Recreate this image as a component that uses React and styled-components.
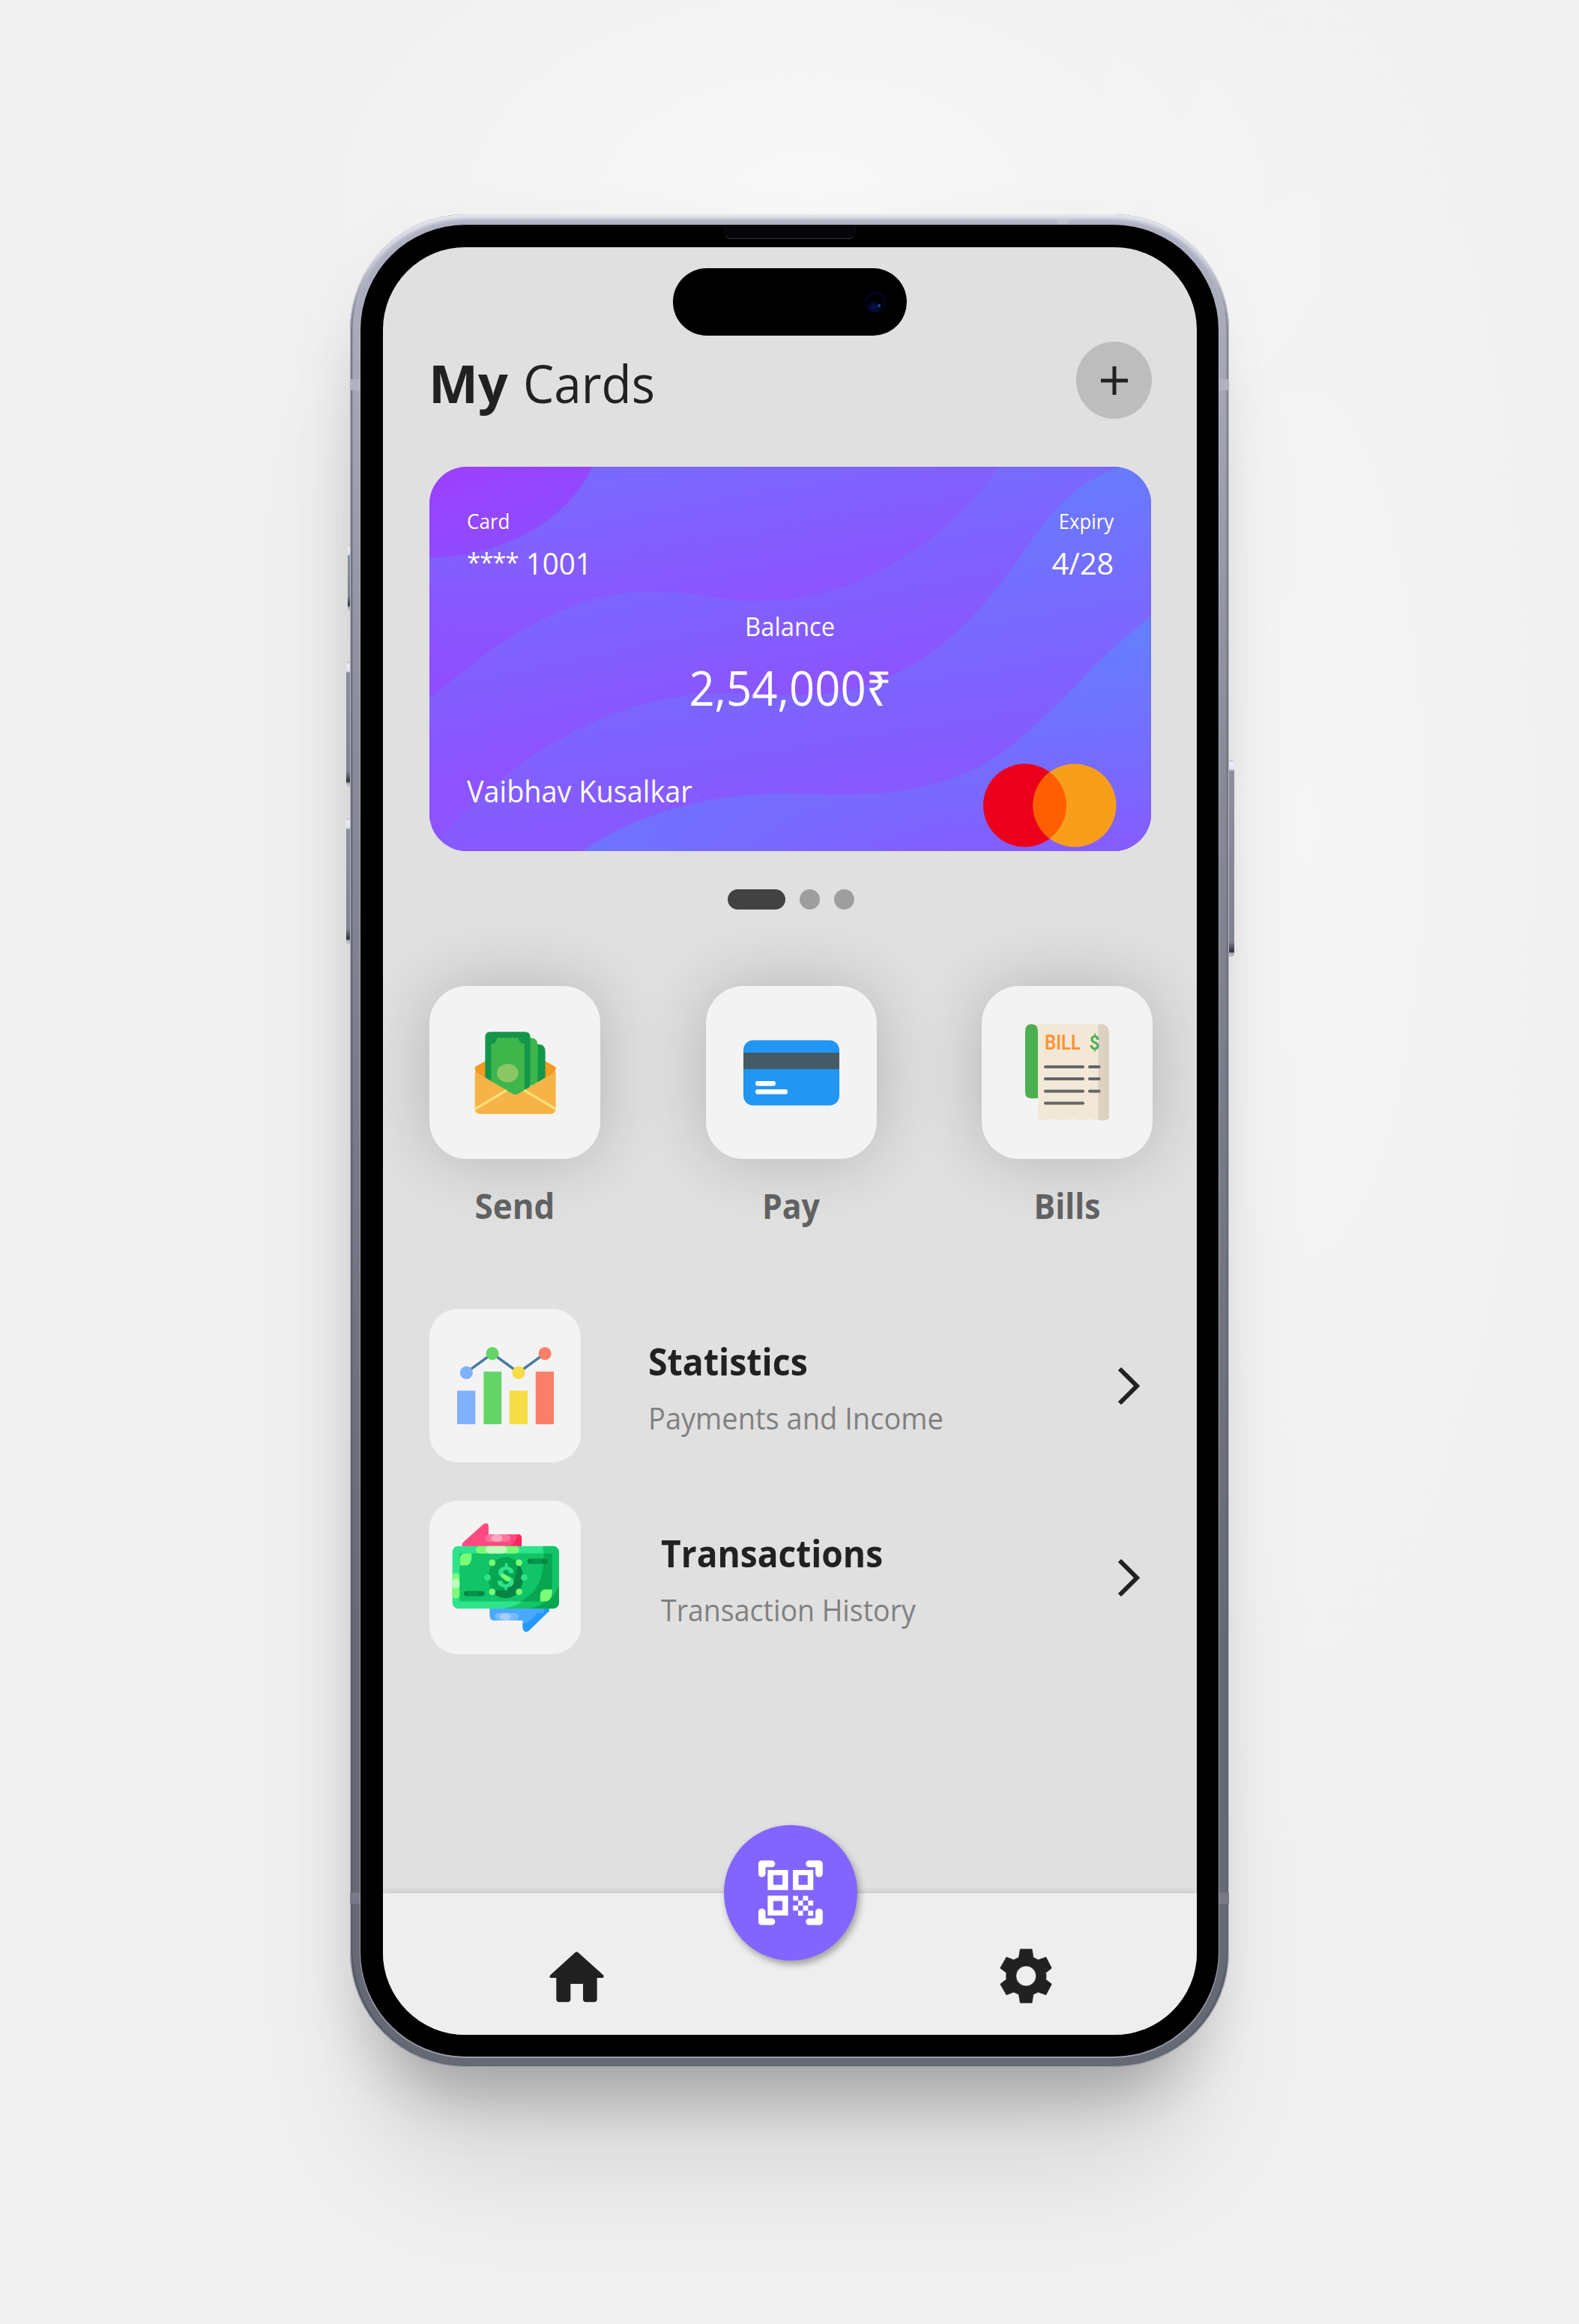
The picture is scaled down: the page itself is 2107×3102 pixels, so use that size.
import React from "react";
import styled, { createGlobalStyle } from "styled-components";

const GlobalStyle = createGlobalStyle`
  *, *::before, *::after { box-sizing: border-box; }
  html, body { margin: 0; padding: 0; }
  body {
    background: #f0f0f0;
    font-family: "Open Sans", "Noto Sans", sans-serif;
    color: #212121;
  }
`;

const Stage = styled.main`
  width: 2107px;
  height: 3102px;
  overflow: hidden;
  padding: 286px 0 0 467px;
  background:
    radial-gradient(ellipse 760px 460px at 1080px 270px, rgba(255, 255, 255, 0.58), rgba(255, 255, 255, 0) 100%),
    radial-gradient(ellipse 420px 1500px at 1740px 1100px, rgba(255, 255, 255, 0.38), rgba(255, 255, 255, 0) 100%),
    #f0f0f0;
`;

const Phone = styled.div`
  position: relative;
  width: 1173px;
  height: 2473px;
  padding: 14px;
  border-radius: 154px;
  background: linear-gradient(#b1b3c4 0, #a3a5b5 260px, #8a8c9a 700px, #787b88 1200px, #666a74 1900px, #656973 100%);
  box-shadow:
    inset 0 7px 5px -1px #e6e6ee,
    inset 0 0 0 1px #a4a7ba,
    inset 4px 0 2px -1px rgba(52, 55, 66, 0.65),
    inset -4px 0 2px -1px rgba(52, 55, 66, 0.5),
    -6px 80px 84px -44px rgba(0, 0, 0, 0.22),
    -8px 170px 170px -50px rgba(0, 0, 0, 0.12),
    -12px 20px 90px 0 rgba(0, 0, 0, 0.04);
`;

const SideKey = styled.span`
  position: absolute;
  top: ${(p) => p.$top}px;
  ${(p) => p.$side}: -${(p) => p.$depth}px;
  width: ${(p) => p.$depth}px;
  height: ${(p) => p.$length}px;
  border-radius: ${(p) => (p.$side === "left" ? "4px 0 0 4px" : "0 4px 4px 0")};
  background: linear-gradient(#b9bbca 0, #ededf4 4px, #dedfe9 13px, #8c8e9e 15px, #7f8291 calc(100% - 20px), #30323a calc(100% - 7px), #b9bac8 calc(100% - 4px));
`;

const Antenna = styled.span`
  position: absolute;
  top: ${(p) => p.$top}px;
  ${(p) => p.$side}: ${(p) => p.$offset || 0}px;
  width: 14px;
  height: ${(p) => p.$height || 15}px;
  background: ${(p) => p.$tint};
`;

const Bezel = styled.div`
  position: relative;
  width: 1145px;
  height: 2445px;
  padding: 30px 29px 29px 30px;
  border-radius: 140px;
  background: #000;
  box-shadow: 0 1px 0 1px rgba(196, 198, 214, 0.55);
`;

const Speaker = styled.span`
  position: absolute;
  top: 0;
  left: 485px;
  width: 176px;
  height: 19px;
  border-radius: 0 0 9px 9px;
  background: #060608;
  border: 1px solid #0d0d12;
  border-top: 0;
  border-bottom-color: #34344a;
`;

const Screen = styled.div`
  position: relative;
  width: 1086px;
  height: 2386px;
  padding: 126px 59px 0 62px;
  display: flex;
  flex-direction: column;
  overflow: hidden;
  border-radius: 110px;
  background: #e0e0e0;
`;

const Island = styled.div`
  position: absolute;
  top: 28px;
  left: 387px;
  width: 312px;
  height: 90px;
  border-radius: 45px;
  background: #000;
`;

const Lens = styled.span`
  position: absolute;
  top: 31px;
  left: 256px;
  width: 28px;
  height: 28px;
  border-radius: 50%;
  background:
    radial-gradient(circle at 19px 19px, #1c74b8 0, rgba(28, 116, 184, 0) 3px),
    radial-gradient(circle at 12px 21px, #06125e 0, rgba(6, 18, 94, 0) 9px),
    radial-gradient(circle, #010105 50%, #040a34 82%, #000 100%);
`;

const Text = styled.span`
  display: block;
  white-space: pre;
  font-size: ${(p) => p.$size}px;
  line-height: ${(p) => p.$line}px;
  font-weight: ${(p) => p.$weight || 400};
  color: ${(p) => p.$color || "inherit"};
  transform: scaleX(${(p) => p.$stretch || 1});
  transform-origin: ${(p) => p.$origin || "left"} center;
`;

const Mask = styled.span`
  position: relative;
  top: -4px;
  font-size: 35px;
  line-height: 1;
  letter-spacing: -1px;
`;

const Header = styled.header`
  display: flex;
  justify-content: space-between;
  height: 103px;
  margin: 0 1px 0 -1px;
`;

const Title = styled.h1`
  display: flex;
  margin: 0;
  padding: 2px 0 0 0;
  gap: 20px;
`;

const AddButton = styled.button`
  display: grid;
  place-items: center;
  width: 101px;
  height: 103px;
  padding: 0;
  border: 0;
  border-radius: 50%;
  background: #bdbdbd;
`;

const BankCard = styled.section`
  position: relative;
  width: 963px;
  height: 513px;
  margin: 64px 0 0 0;
  padding: 55px 46px 0 50px;
  overflow: hidden;
  border-radius: 50px;
  color: #fff;
`;

const CardArt = styled.svg`
  position: absolute;
  inset: 0;
  width: 100%;
  height: 100%;
`;

const CardBody = styled.div`
  position: relative;
  display: flex;
  flex-direction: column;
`;

const CardRow = styled.div`
  display: flex;
  justify-content: space-between;
  margin-top: ${(p) => p.$top || 0}px;
`;

const Field = styled.div`
  display: flex;
  flex-direction: column;
  align-items: ${(p) => p.$align || "flex-start"};
  gap: ${(p) => p.$gap}px;
  margin: ${(p) => p.$margin || 0};
`;

const Pager = styled.div`
  display: flex;
  justify-content: center;
  gap: 19px;
  height: 27px;
  margin-top: 51px;
`;

const Dot = styled.span`
  width: ${(p) => (p.$active ? 77 : 27)}px;
  height: 27px;
  border-radius: 14px;
  background: ${(p) => (p.$active ? "#424242" : "#9e9e9e")};
`;

const Actions = styled.div`
  display: flex;
  justify-content: space-between;
  margin-top: 102px;
`;

const Action = styled.div`
  display: flex;
  flex-direction: column;
  align-items: center;
  gap: 32px;
`;

const ActionTile = styled.div`
  display: grid;
  place-items: center;
  width: 228px;
  height: 231px;
  border-radius: 50px;
  background: #f3f3f3;
  box-shadow: 0 0 90px rgba(0, 0, 0, 0.2);
`;

const List = styled.div`
  display: flex;
  flex-direction: column;
  gap: 51px;
  margin-top: 108px;
`;

const ListRow = styled.div`
  display: flex;
  align-items: center;
  height: 205px;
`;

const ListTile = styled.div`
  display: grid;
  place-items: center;
  flex: none;
  width: 202px;
  height: 205px;
  border-radius: 38px;
  background: #f3f3f3;
`;

const ListCopy = styled.div`
  flex: 1;
  padding: 13px 0 0 ${(p) => p.$indent}px;
`;

const ChevronBox = styled.div`
  display: flex;
  margin-right: 17px;
`;

const NavBar = styled.nav`
  position: relative;
  display: flex;
  justify-content: space-between;
  height: 189px;
  margin: auto -59px 0 -62px;
  padding: 74px 193px 0 222px;
  background: #eeeeee;
  box-shadow: 0 -2px 8px rgba(0, 0, 0, 0.12);
`;

const NavIcon = styled.div`
  padding-top: ${(p) => p.$drop || 0}px;
`;

const ScanButton = styled.button`
  position: absolute;
  top: -91px;
  left: 455px;
  display: grid;
  place-items: center;
  width: 178px;
  height: 181px;
  padding: 0;
  border: 0;
  border-radius: 50%;
  background: #8265fe;
  box-shadow: 3px 5px 10px rgba(0, 0, 0, 0.34);
`;

const Waves = () => (
  <CardArt viewBox="37 56 1494 1256" preserveAspectRatio="none">
    <defs>
      <linearGradient id="band1" gradientUnits="userSpaceOnUse" x1="560" y1="56" x2="680" y2="490">
        <stop offset="0" stopColor="#7b69ff" />
        <stop offset="1" stopColor="#8b54ff" />
      </linearGradient>
      <linearGradient id="band1left" gradientUnits="userSpaceOnUse" x1="300" y1="300" x2="60" y2="800">
        <stop offset="0" stopColor="#8659ff" stopOpacity="0" />
        <stop offset="1" stopColor="#8f4dff" />
      </linearGradient>
      <linearGradient id="blob" gradientUnits="userSpaceOnUse" x1="90" y1="80" x2="240" y2="330">
        <stop offset="0" stopColor="#9b41ff" />
        <stop offset="1" stopColor="#8c4dff" />
      </linearGradient>
      <linearGradient id="band2" gradientUnits="userSpaceOnUse" x1="480" y1="250" x2="680" y2="850">
        <stop offset="0" stopColor="#756eff" />
        <stop offset="1" stopColor="#8c53ff" />
      </linearGradient>
      <linearGradient id="band3" gradientUnits="userSpaceOnUse" x1="900" y1="180" x2="1110" y2="1010">
        <stop offset="0" stopColor="#677cff" />
        <stop offset="0.6" stopColor="#7b67ff" />
        <stop offset="1" stopColor="#865aff" />
      </linearGradient>
      <linearGradient id="band4" gradientUnits="userSpaceOnUse" x1="1300" y1="640" x2="1400" y2="1320">
        <stop offset="0" stopColor="#667dff" />
        <stop offset="0.55" stopColor="#766cff" />
        <stop offset="1" stopColor="#865cff" />
      </linearGradient>
      <linearGradient id="band4left" gradientUnits="userSpaceOnUse" x1="400" y1="0" x2="1100" y2="0">
        <stop offset="0" stopColor="#6f73ff" />
        <stop offset="1" stopColor="#786aff" stopOpacity="0" />
      </linearGradient>
    </defs>
    <rect x="37" y="56" width="1494" height="1256" fill="url(#band1)" />
    <path d="M37 330H480V480L37 820Z" fill="url(#band1left)" />
    <path d="M37 56H374C345 160 285 240 220 290C165 328 95 356 37 353Z" fill="url(#blob)" />
    <path d="M37 812C70 772 125 700 165 655C260 550 370 463 500 463C600 463 630 495 720 495C920 495 1110 300 1217 56H1531V1312H37Z" fill="url(#band2)" />
    <path d="M60 1267C95 1210 140 1130 220 1035C320 920 430 832 580 802C650 790 730 806 810 803C910 798 980 760 1050 690C1150 590 1210 460 1262 345C1320 215 1360 120 1460 60L1531 56V1312H60Z" fill="url(#band3)" />
    <path d="M355 1312C440 1215 570 1140 720 1127C790 1122 860 1131 920 1128C1060 1121 1160 1070 1240 970C1350 830 1430 660 1531 545V1312Z" fill="url(#band4)" />
    <path d="M355 1312C440 1215 570 1140 720 1127C790 1122 860 1131 920 1128C1000 1124 1060 1105 1110 1080V1312Z" fill="url(#band4left)" />
  </CardArt>
);

const PaymentLogo = () => (
  <svg width="178" height="112" viewBox="0 0 178 112">
    <circle cx="55.5" cy="56" r="55.5" fill="#eb001b" />
    <circle cx="122" cy="56" r="55.5" fill="#f79e1b" />
    <path d="M88.75 11.6A55.5 55.5 0 0 1 88.75 100.4A55.5 55.5 0 0 1 88.75 11.6Z" fill="#ff5f00" />
  </svg>
);

const PlusIcon = () => (
  <svg width="36" height="38" viewBox="0 0 36 38" fill="none" stroke="#212121" strokeWidth="5">
    <path d="M18 0V38M0 19H36" />
  </svg>
);

const SendIcon = () => (
  <svg width="109" height="110" viewBox="248 260 326 330" preserveAspectRatio="none">
    <path d="M250 402L300 373H522L570 400Q575 404 573 412L540 470H280L250 412Z" fill="#f39a22" />
    <path d="M500 310Q531 310 531 338V460H480V310Z" fill="#13954a" />
    <path d="M468 285Q501 285 501 313V475H450V285Z" fill="#3fb64b" />
    <path d="M291 282Q291 261 312 261H449Q471 261 471 282V490L411 512L291 460Z" fill="#13954a" />
    <path d="M338 285H424Q426 308 448 309V500L411 514L370 500L315 465V309Q337 308 338 285Z" fill="#3fb64b" />
    <ellipse cx="381" cy="426" rx="43" ry="37" fill="#8bc766" />
    <path d="M250 419L399 508Q411 516 424 508L573 419V567Q573 590 550 590H273Q250 590 250 567Z" fill="#f6b448" />
    <path d="M252 569L373 497M572 569L450 497" stroke="#ffdf77" strokeWidth="10" strokeLinecap="round" />
  </svg>
);

const PayIcon = () => (
  <svg width="128" height="88" viewBox="0 0 128 88">
    <rect y="0.5" width="128" height="87" rx="13" fill="#2196f3" />
    <rect y="17" width="128" height="22" fill="#455a64" />
    <rect x="16" y="55" width="27" height="6.5" rx="3" fill="#fff" />
    <rect x="16" y="66" width="43" height="6.5" rx="3" fill="#fff" />
  </svg>
);

const BillIcon = () => (
  <svg width="112" height="129" viewBox="0 0 112 129">
    <path d="M0 9Q0 0 8.500 0Q17 0 17 9V99H8Q0 99 0 91Z" fill="#4caf50" />
    <path d="M9 0H100V127Q94 129 90 127.500Q85 125.500 80 127.500Q74 129.500 68 127.500Q63 125.500 57 127.500Q50 130 44 127.500Q38 125.500 33 127.500Q24 130 17 126.500V9Q17 0 9 0Z" fill="#f3e8d8" />
    <path d="M97.500 0H102Q112 1 112 11V126Q107 129 103 129Q99 129 97.500 127Z" fill="#ddd1c3" />
    <text x="26" y="34" fontFamily="Roboto, sans-serif" fontWeight="600" fontSize="28.5" fill="#ff9333" textLength="48" lengthAdjust="spacingAndGlyphs">BILL</text>
    <text x="85.500" y="34" fontFamily="Roboto, sans-serif" fontWeight="600" fontSize="26" fill="#4caf50" textLength="14" lengthAdjust="spacingAndGlyphs">$</text>
    <path d="M27 57H77M86 57H98.500M27 73H77M86 73H98.500M27 89.500H77M86 89.500H98.500M27 105.500H77" stroke="#666" strokeWidth="4.200" strokeLinecap="round" />
  </svg>
);

const StatsIcon = () => (
  <svg width="129" height="103" viewBox="122 204 266 309" preserveAspectRatio="none">
    <path d="M147 306L219 230L291 306L363 230" fill="none" stroke="#477b9e" strokeWidth="9" />
    <path d="M122 379H172V513H122Z" fill="#80b1fb" />
    <path d="M195 302H244V513H195Z" fill="#63d465" />
    <path d="M266 379H316V513H266Z" fill="#f6dc45" />
    <path d="M338 302H388V513H338Z" fill="#fa7f69" />
    <ellipse cx="147.500" cy="306.500" rx="17.500" ry="26" fill="#80b1fb" />
    <ellipse cx="219" cy="230" rx="17.500" ry="26" fill="#63d465" />
    <ellipse cx="291" cy="306.500" rx="17.500" ry="26" fill="#f6dc45" />
    <ellipse cx="363.500" cy="230" rx="17.500" ry="26" fill="#fa7f69" />
  </svg>
);

const TransferIcon = () => (
  <svg width="143" height="145" viewBox="107 911 295 433" preserveAspectRatio="none">
    <defs>
      <clipPath id="note"><rect x="108" y="1002" width="294" height="250" rx="17" ry="25" /></clipPath>
    </defs>
    <path d="M136 1004Q133 993 140 985L194 915Q207 905 208 925V956H290Q299 956 299 970V1004Z" fill="#ff4a81" />
    <path d="M287 956Q299 956 299 970V1004H266Q284 990 287 956Z" fill="#ff2360" />
    <rect x="198" y="956" width="70" height="30" rx="12" ry="15" fill="#ff729d" />
    <ellipse cx="231" cy="971" rx="15" ry="15" fill="#ffa6c2" />
    <path d="M211 1250V1280Q212 1299 222 1299H302V1326Q303 1344 312 1344Q316 1344 320 1338L370 1268Q376 1262 375 1250Z" fill="#4aa9ff" />
    <path d="M375 1250Q376 1262 370 1268L320 1338Q316 1344 312 1344Q303 1344 302 1326V1312Q326 1304 342 1269H360V1250Z" fill="#2399ff" />
    <rect x="225" y="1269" width="66" height="30" rx="12" ry="15" fill="#77bbff" />
    <ellipse cx="254" cy="1284" rx="15" ry="15" fill="#a4cdff" />
    <g clipPath="url(#note)">
      <rect x="108" y="1002" width="294" height="250" fill="#2ee38b" />
      <path d="M358 1002H402V1252H248Q365 1225 358 1002Z" fill="#11c568" />
      <path d="M402 1160Q385 1225 322 1252H402Z" fill="#08a650" />
      <path d="M128 1032H383V1223H128Z" fill="#11c467" />
      <path d="M360 1032H383V1223H294Q363 1180 360 1032Z" fill="#08a650" />
      <rect x="173" y="1002" width="119" height="30" rx="11" ry="15" fill="#7bff77" />
      <rect x="200" y="1002" width="59" height="30" rx="11" ry="15" fill="#bfffbd" />
      <rect x="108" y="1110" width="20" height="102" rx="10" ry="15" fill="#7bff77" />
      <rect x="108" y="1133" width="20" height="38" rx="10" ry="15" fill="#bfffbd" />
      <path d="M129 1080V1052Q130 1032 142 1032H161V1052Q159 1078 146 1080Z" fill="#7bff77" />
      <path d="M350 1223V1198Q351 1176 364 1175H383V1188Q382 1222 364 1223Z" fill="#7bff77" />
      <rect x="315" y="1053" width="56" height="20" rx="8" ry="10" fill="#078443" />
      <rect x="326" y="1053" width="28" height="20" fill="#089449" />
      <rect x="140" y="1182" width="57" height="20" rx="8" ry="10" fill="#078443" />
      <rect x="151" y="1182" width="28" height="20" fill="#089449" />
      <ellipse cx="255" cy="1128" rx="48" ry="82" fill="#08a650" />
      <path d="M288 1068Q303 1095 303 1128Q300 1205 255 1210Q228 1208 215 1178Q286 1195 288 1068Z" fill="#078443" />
      {[[218, 1069], [292, 1069], [218, 1185], [292, 1185]].map(([cx, cy]) => (
        <ellipse key={`${cx}-${cy}`} cx={cx} cy={cy} rx="9" ry="13" fill="#7bff77" />
      ))}
      <ellipse cx="205" cy="1128" rx="9" ry="13" fill="#2ee38b" />
      <ellipse cx="306" cy="1128" rx="9" ry="13" fill="#2ee38b" />
      <text transform="translate(255 1169) scale(2.4 3)" textAnchor="middle" fontFamily="Roboto, sans-serif" fontWeight="700" fontSize="38" fill="#2ee38b">$</text>
      <path d="M249 1121L261 1135" stroke="#7bff77" strokeWidth="15" strokeLinecap="round" />
    </g>
  </svg>
);

const ChevronIcon = () => (
  <svg width="30" height="52" viewBox="0 0 30 52" fill="none" stroke="#212121" strokeWidth="6">
    <path d="M3 3L26 26L3 49" />
  </svg>
);

const HomeIcon = () => (
  <svg width="73" height="68" viewBox="880 613 219 204">
    <path d="M983 617Q989.500 611 996 617L1096 707Q1101 716 1092 718H1071V803Q1071 815 1060 815H1027Q1015 815 1015 803V742H965V803Q965 815 953 815H920Q908 815 908 803V718H886Q878 716 884 707Z" fill="#212121" />
  </svg>
);

const GearIcon = () => (
  <svg width="70" height="73" viewBox="1217 601 195 219" preserveAspectRatio="none">
    <path
      fillRule="evenodd"
      fill="#212121"
      stroke="#212121"
      strokeWidth="2"
      strokeLinejoin="round"
      d="M1293 603H1337L1342 636L1360 646L1389 635L1410 679L1388 698L1390 710L1388 724L1410 743L1389 786L1360 775L1342 784L1337 818H1293L1288 784L1269 775L1242 786L1219 743L1242 724L1241 710L1242 698L1219 679L1242 635L1269 646L1288 636ZM1315 670A37 40 0 1 0 1315 751A37 40 0 1 0 1315 670Z"
    />
  </svg>
);

const ScanIcon = () => (
  <svg width="86" height="87" viewBox="313 250 240 260" preserveAspectRatio="none" fill="none" stroke="#fff">
    <g strokeWidth="27" strokeLinecap="round" strokeLinejoin="round">
      <path d="M326 304V264H362M503 264H539V304M326 456V495H362M503 495H539V456" />
    </g>
    <g strokeWidth="21">
      <path d="M358 299H413V358H358ZM452 299H507V358H452ZM358 402H413V460H358Z" />
    </g>
    <path
      stroke="none"
      fill="#fff"
      d="M442 392H461V411H442ZM479 392H498V411H479ZM461 411H479V431H461ZM498 411H517V431H498ZM442 431H461V451H442ZM479 431H498V451H479ZM461 451H479V471H461ZM498 451H517V471H498Z"
    />
  </svg>
);

const actions = [
  { label: "Send", icon: <SendIcon />, stretch: 0.955 },
  { label: "Pay", icon: <PayIcon />, stretch: 0.93 },
  { label: "Bills", icon: <BillIcon />, stretch: 0.925 },
];

const rows = [
  { title: "Statistics", note: "Payments and Income", icon: <StatsIcon />, indent: 90, titleStretch: 0.93, noteStretch: 0.928 },
  { title: "Transactions", note: "Transaction History", icon: <TransferIcon />, indent: 107, titleStretch: 0.922, noteStretch: 0.915 },
];

export default function App() {
  return (
    <>
      <GlobalStyle />
      <Stage>
        <Phone>
          <SideKey $side="left" $top={441} $length={88} $depth={3} />
          <SideKey $side="left" $top={597} $length={167} $depth={5} />
          <SideKey $side="left" $top={806} $length={168} $depth={5} />
          <SideKey $side="right" $top={728} $length={263} $depth={7} />
          <Antenna $side="left" $top={220} $tint="#b0b2c2" />
          <Antenna $side="right" $top={220} $tint="#b0b2c2" />
          <Antenna $side="left" $top={2240} $tint="#777987" />
          <Antenna $side="right" $top={2240} $tint="#777987" />
          <Antenna $side="left" $offset={944} $top={2} $height={11} $tint="rgba(214, 215, 226, 0.3)" />
          <Bezel>
            <Speaker />
            <Screen>
              <Island>
                <Lens />
              </Island>

              <Header>
                <Title>
                  <Text $size={70} $line={107} $weight={700}>My</Text>
                  <Text $size={70} $line={107} $stretch={0.937}>Cards</Text>
                </Title>
                <AddButton aria-label="Add card">
                  <PlusIcon />
                </AddButton>
              </Header>

              <BankCard>
                <Waves />
                <CardBody>
                  <CardRow>
                    <Field $gap={10}>
                      <Text $size={27} $line={36} $stretch={0.965}>Card</Text>
                      <Text $size={41} $line={54} $stretch={0.94}><Mask>****</Mask> 1001</Text>
                    </Field>
                    <Field $gap={10} $align="flex-end" $margin="0 4px 0 0">
                      <Text $size={27} $line={36} $origin="right" $stretch={0.95}>Expiry</Text>
                      <Text $size={41} $line={54} $origin="right" $stretch={0.97}>4/28</Text>
                    </Field>
                  </CardRow>
                  <Field $gap={17} $align="center" $margin="35px 4px 0 0">
                    <Text $size={35} $line={46} $origin="center" $stretch={0.937}>Balance</Text>
                    <Text $size={64} $line={84} $origin="center" $stretch={0.935}>2,54,000₹</Text>
                  </Field>
                  <CardRow $top={59}>
                    <Field $margin="10px 0 0 0">
                      <Text $size={40.5} $line={54} $stretch={0.935}>Vaibhav Kusalkar</Text>
                    </Field>
                    <PaymentLogo />
                  </CardRow>
                </CardBody>
              </BankCard>

              <Pager>
                <Dot $active />
                <Dot />
                <Dot />
              </Pager>

              <Actions>
                {actions.map((a) => (
                  <Action key={a.label}>
                    <ActionTile>{a.icon}</ActionTile>
                    <Text $size={46} $line={60} $weight={700} $color="#616161" $origin="center" $stretch={a.stretch}>{a.label}</Text>
                  </Action>
                ))}
              </Actions>

              <List>
                {rows.map((r) => (
                  <ListRow key={r.title}>
                    <ListTile>{r.icon}</ListTile>
                    <ListCopy $indent={r.indent}>
                      <Text $size={50} $line={72} $weight={700} $stretch={r.titleStretch}>{r.title}</Text>
                      <Text $size={41} $line={78} $color="#808080" $stretch={r.noteStretch}>{r.note}</Text>
                    </ListCopy>
                    <ChevronBox>
                      <ChevronIcon />
                    </ChevronBox>
                  </ListRow>
                ))}
              </List>

              <NavBar>
                <NavIcon $drop={4}>
                  <HomeIcon />
                </NavIcon>
                <NavIcon>
                  <GearIcon />
                </NavIcon>
                <ScanButton aria-label="Scan code">
                  <ScanIcon />
                </ScanButton>
              </NavBar>
            </Screen>
          </Bezel>
        </Phone>
      </Stage>
    </>
  );
}
